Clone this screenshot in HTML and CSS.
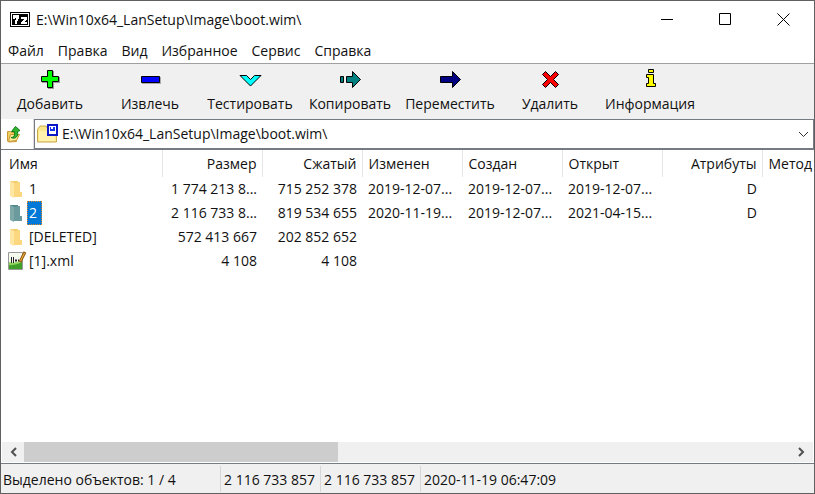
FILE: index.html
```html
<!DOCTYPE html>
<html lang="ru">
<head>
  <meta charset="UTF-8">
  <title>E:\Win10x64_LanSetup\Image\boot.wim\</title>
  <link rel="stylesheet" href="styles.css">
</head>
<body>
  <div class="window">
    <header class="titlebar">
      <svg class="app-icon" width="20" height="15" viewBox="0 0 20 15">
        <rect width="20" height="15"/>
        <rect x="1" y="1" width="18" height="13" fill="#fff"/>
        <rect x="2" y="2" width="16" height="11"/>
        <path d="M3 3h6v4h-1v2h-1v3H5V8h1V6H5v1H3zM11 5h6v3h-1v1h-1v1h2v2h-6v-2h1V9h1V8h1V7h-3z" fill="#fff"/>
      </svg>
      <h1>E:\Win10x64_LanSetup\Image\boot.wim\</h1>
      <div class="caption-buttons">
        <button aria-label="Свернуть"><svg width="13" height="13"><path d="M0 6.500h12" stroke="#000"/></svg></button>
        <button aria-label="Развернуть"><svg width="13" height="13"><path d="M.5 .5h11v11h-11z" fill="none" stroke="#000"/></svg></button>
        <button aria-label="Закрыть"><svg width="13" height="13"><path d="M.5 .5l12 12M12.500 .5l-12 12" stroke="#000"/></svg></button>
      </div>
    </header>

    <nav class="menu">
      <button>Файл</button>
      <button>Правка</button>
      <button>Вид</button>
      <button>Избранное</button>
      <button>Сервис</button>
      <button>Справка</button>
    </nav>

    <div class="toolbar">
      <button>
        <svg width="24" height="24"><path d="M10 4h6v6h6v6h-6v6h-6v-6H4v-6h6z" fill="#999"/><path d="M9.500 3.500h5v6h6v5h-6v6h-5v-6h-6v-5h6z" fill="#0f0" stroke="#000"/></svg>
        Добавить
      </button>
      <button>
        <svg width="24" height="24"><path d="M4 10h19v7H4z" fill="#aaa"/><path d="M3.500 9.500h18v6h-18z" fill="#00f" stroke="#000"/></svg>
        Извлечь
      </button>
      <button>
        <svg width="24" height="24"><path d="M2 8.500h6.500l4 4 4-4H23L12.500 19z" fill="#0ff" stroke="#000"/></svg>
        Тестировать
      </button>
      <button>
        <svg width="24" height="24"><path d="M2.500 9.500h3v6h-3zM8.500 9.500h6v-5l8 8-8 8v-5h-6z" fill="#008080" stroke="#000"/></svg>
        Копировать
      </button>
      <button>
        <svg width="24" height="24"><path d="M2.500 9.500h12v-5l8 8-8 8v-5h-12z" fill="#000080" stroke="#000"/></svg>
        Переместить
      </button>
      <button>
        <svg width="24" height="24"><path d="M4.500 7.500l3-3 5 5 5-5 3 3-5 5 5 5-3 3-5-5-5 5-3-3 5-5z" fill="#f00" stroke="#000"/></svg>
        Удалить
      </button>
      <button>
        <svg width="24" height="24"><path d="M10.500 2.500h5v3h-5zM8.500 7.500h7v9h2v3h-9v-3h2v-6h-2z" fill="#ff0" stroke="#000"/></svg>
        Информация
      </button>
    </div>

    <div class="address">
      <button class="up" aria-label="Вверх">
        <svg width="16" height="18">
          <path d="M1.500 6.500h3l1 1h5v9l-8 .5-1-1z" fill="#f3cd62" stroke="#c79a35"/>
          <path d="M2.500 16.500l2-7h9l-3 6z" fill="#ffeb9b" stroke="#c79a35"/>
          <path d="M5 12.500c3 0 4-2 3.500-6H5.500L9.500 1.500l4.500 4-2.500 1c1 5-2 8-6.500 6z" fill="#2fb62f" stroke="#137a17"/>
        </svg>
      </button>
      <div class="path-box">
        <svg width="22" height="20">
          <path d="M.5 5.500L3 2h6l2 3h8.500v13h-19z" fill="#fbe78c" stroke="#c6a94c"/>
          <path d="M2 7h16v10H2z" fill="#fff2ae"/>
          <rect x="11" y="1" width="9" height="10" fill="#fff" stroke="#0b16c8" stroke-width="2"/>
          <path d="M13 3h5v4h-5z" fill="#1634ed"/>
          <path d="M14 3h2v2h-2z" fill="#fff"/>
        </svg>
        <input type="text" aria-label="Путь" value="E:\Win10x64_LanSetup\Image\boot.wim\">
        <button aria-label="Список папок"><svg width="11" height="7"><path d="M1 1l4.500 4.500L10 1" fill="none" stroke="#333"/></svg></button>
      </div>
    </div>

    <main class="list">
      <div class="table-wrap">
        <table>
          <colgroup>
            <col class="name"><col span="6"><col>
          </colgroup>
          <thead>
            <tr>
              <th>Имя</th><th class="num">Размер</th><th class="num">Сжатый</th><th>Изменен</th>
              <th>Создан</th><th>Открыт</th><th class="num">Атрибуты</th><th>Метод</th>
            </tr>
          </thead>
          <tbody>
            <tr>
              <td><div class="file"><svg width="20" height="20"><path d="M3 2h8v15H3z" fill="#f3cc70"/><path d="M3 2l4 2v15l-4-2z" fill="#ffe6a2"/><path d="M10 3h3v10h2v5H7V4h3z" fill="#fbd77f"/></svg><span>1</span></div></td>
              <td class="num">1 774 213 8...</td><td class="num">715 252 378</td><td>2019-12-07...</td>
              <td>2019-12-07...</td><td>2019-12-07...</td><td class="num">D</td><td></td>
            </tr>
            <tr class="selected">
              <td><div class="file"><svg width="20" height="20"><path d="M3 2h8v15H3z" fill="#568c91"/><path d="M3 2l4 2v15l-4-2z" fill="#7fa9a8"/><path d="M10 3h3v10h2v5H7V4h3z" fill="#6b9b9c"/></svg><span>2</span></div></td>
              <td class="num">2 116 733 8...</td><td class="num">819 534 655</td><td>2020-11-19...</td>
              <td>2019-12-07...</td><td>2021-04-15...</td><td class="num">D</td><td></td>
            </tr>
            <tr>
              <td><div class="file"><svg width="20" height="20"><path d="M3 2h8v15H3z" fill="#f3cc70"/><path d="M3 2l4 2v15l-4-2z" fill="#ffe6a2"/><path d="M10 3h3v10h2v5H7V4h3z" fill="#fbd77f"/></svg><span>[DELETED]</span></div></td>
              <td class="num">572 413 667</td><td class="num">202 852 652</td><td></td>
              <td></td><td></td><td></td><td></td>
            </tr>
            <tr>
              <td><div class="file"><svg width="20" height="20">
                <path d="M1.500 1.500h14v17h-14z" fill="#f5faef" stroke="#999"/>
                <path d="M2 11q6 2 13-2v9H2z" fill="#8fd45a"/>
                <path d="M2 14q7 1 13-3v7H2z" fill="#3f9f2a"/>
                <path d="M4.500 6v6M6.500 6v6" stroke="#222"/>
                <path d="M8 9.500h2M11 9.500h1" stroke="#222" stroke-width="2"/>
                <path d="M18 1l-5 10" stroke="#955a12" stroke-width="3"/>
                <path d="M17.500 2l-4 8" stroke="#f4bb48"/>
              </svg><span>[1].xml</span></div></td>
              <td class="num">4 108</td><td class="num">4 108</td><td></td>
              <td></td><td></td><td></td><td></td>
            </tr>
          </tbody>
        </table>
      </div>
      <div class="scrollbar">
        <button aria-label="Влево"><svg width="8" height="10"><path d="M7 1L3 5l4 4" fill="none" stroke="#505050" stroke-width="2"/></svg></button>
        <div class="track"><div class="thumb"></div></div>
        <button aria-label="Вправо"><svg width="8" height="10"><path d="M1 1l4 4-4 4" fill="none" stroke="#505050" stroke-width="2"/></svg></button>
      </div>
    </main>

    <footer class="status">
      <span class="count">Выделено объектов: 1 / 4</span>
      <span>2 116 733 857</span>
      <span>2 116 733 857</span>
      <span>2020-11-19 06:47:09</span>
    </footer>
  </div>
</body>
</html>
```
FILE: styles.css
```css
* {
  box-sizing: border-box;
}

body {
  margin: 0;
  font: 14px/20px "Open Sans", "Noto Sans", sans-serif;
  color: #111;
}

button, input {
  font: inherit;
  color: inherit;
  border: none;
  background: none;
  padding: 0;
}

svg {
  display: block;
  flex: none;
}

.window {
  display: flex;
  flex-direction: column;
  height: 100vh;
  border: 1px solid #606060;
  background: #fff;
}

/* Заголовок окна */
.titlebar {
  display: flex;
  align-items: center;
  height: 37px;
  padding: 0 2px 0 9px;
}

.titlebar h1 {
  margin: 0 0 0 6px;
  font-size: 14px;
  font-weight: normal;
}

.caption-buttons {
  display: flex;
  margin-left: auto;
}

.caption-buttons button {
  display: flex;
  align-items: center;
  justify-content: center;
  width: 58px;
  height: 36px;
}

/* Меню */
.menu {
  display: flex;
  height: 25px;
}

.menu button {
  padding: 0 7px;
}

/* Панель инструментов */
.toolbar {
  display: flex;
  height: 56px;
  background: #f0f0f0;
  border-top: 1px solid #a0a0a0;
}

.toolbar button {
  display: flex;
  flex-direction: column;
  align-items: center;
  width: 100px;
  padding: 3px 2px 0 0;
  gap: 3px;
}

/* Адресная строка */
.address {
  display: flex;
  height: 30px;
}

.up {
  display: flex;
  align-items: center;
  width: 33px;
  padding-left: 5px;
  border-right: 1px solid #ddd;
}

.path-box {
  display: flex;
  align-items: center;
  flex: 1;
  border: 1px solid #767a82;
  padding: 0 4px 0 2px;
}

.path-box input {
  flex: 1;
  min-width: 0;
  margin-left: 3px;
  outline: none;
}

/* Список файлов */
.list {
  display: flex;
  flex-direction: column;
  flex: 1;
  min-height: 0;
  padding: 0 1px 1px;
  border-top: 1px solid #767a82;
  border-bottom: 1px solid #767a82;
}

.table-wrap {
  flex: 1;
  overflow: hidden;
}

table {
  width: 860px;
  table-layout: fixed;
  border-collapse: collapse;
}

col {
  width: 100px;
}

col.name {
  width: 160px;
}

th, td {
  height: 24px;
  padding: 0 5px 0 6px;
  text-align: left;
  font-weight: normal;
  white-space: nowrap;
}

th:first-child, td:first-child {
  padding-left: 7px;
}

th {
  height: 27px;
  padding-top: 1px;
  border-right: 1px solid #e5e5e5;
}

.num {
  text-align: right;
}

.file {
  display: flex;
  align-items: center;
  height: 24px;
  margin-left: -2px;
}

.file span {
  padding: 0 1px;
  border: 1px solid transparent;
  line-height: 22px;
}

.selected .file span {
  padding-right: 4px;
  border: 1px dotted #e08828;
  background: #0078d7;
  color: #fff;
}

.scrollbar {
  display: flex;
  height: 20px;
  background: #f0f0f0;
}

.scrollbar button {
  display: flex;
  align-items: center;
  justify-content: center;
  width: 22px;
}

.track {
  flex: 1;
}

.thumb {
  width: 41%;
  height: 100%;
  background: #cdcdcd;
}

/* Строка состояния */
.status {
  display: flex;
  height: 29px;
  padding: 2px 0 1px;
  background: #f0f0f0;
}

.status span {
  width: 100px;
  padding: 4px 0 0 3px;
  border-left: 1px solid #d7d7d7;
  white-space: nowrap;
}

.status .count {
  width: 219px;
  padding-left: 2px;
  border-left: none;
}

.status span:last-child {
  flex: 1;
}
```
